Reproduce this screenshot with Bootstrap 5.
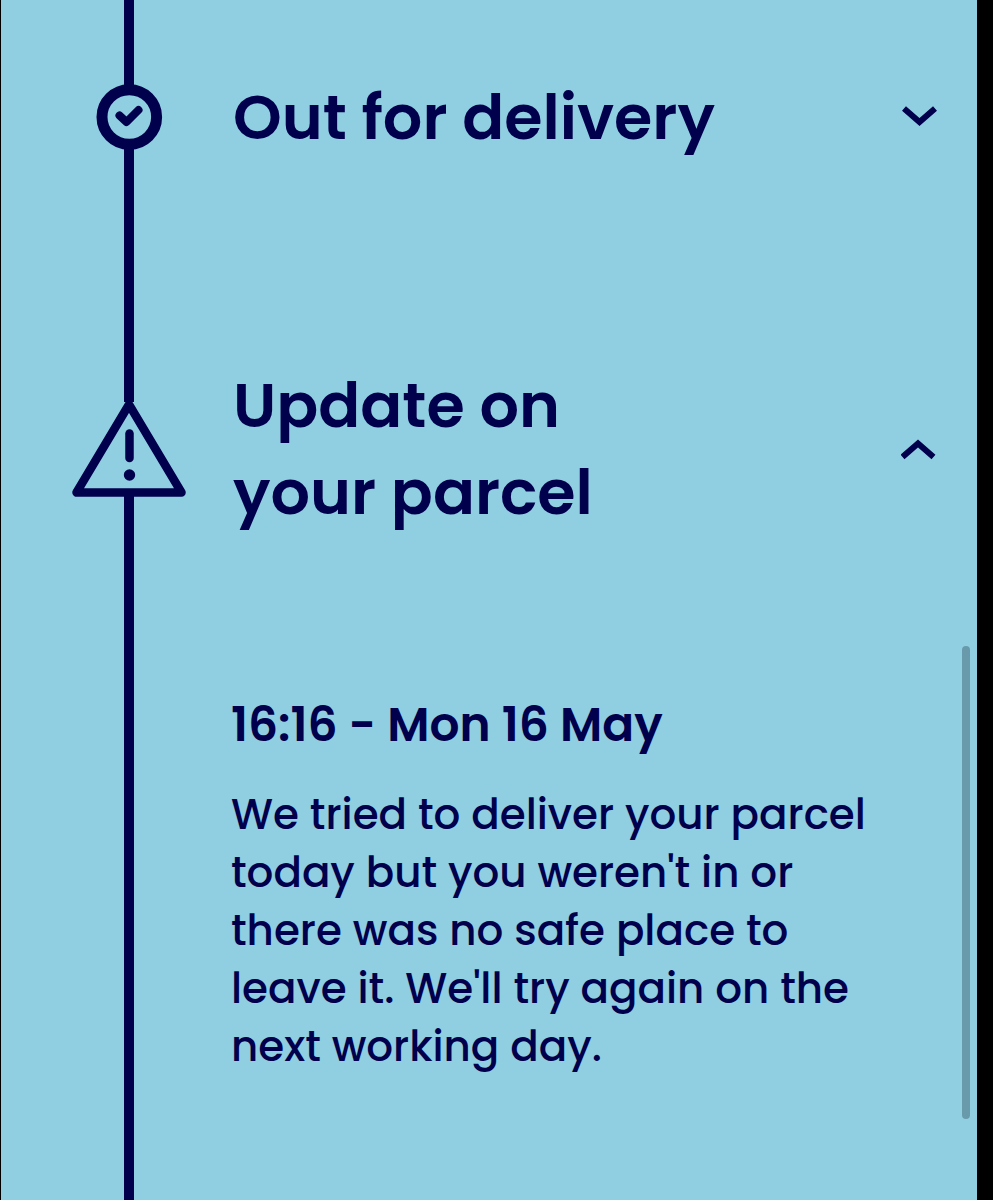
<!DOCTYPE html>
<html lang="en">
<head>
<meta charset="utf-8">
<meta name="viewport" content="width=device-width, initial-scale=1">
<title>Parcel tracking</title>
<link href="https://cdn.jsdelivr.net/npm/bootstrap@5.3.0/dist/css/bootstrap.min.css" rel="stylesheet">
<style>
  :root { --navy: #00004d; --sky: #90cee1; }
  body { background: #000; color: var(--navy); font-family: Poppins, Inter, sans-serif; }
  .tracker { background: var(--sky); border-left: 1px solid #000; border-right: 16px solid #000; }
  .step-row { padding-left: 72px; padding-right: 40px; column-gap: 46px; }
  .rail { width: 112px; }
  .rail svg { overflow: visible; margin: -1px 0; }
  .rail-line { width: 10px; background: var(--navy); }
  .step-short { min-height: 234px; }
  .step-tall { min-height: 429px; }
  .step-title { font-size: 62px; line-height: 87px; font-weight: 600; padding-left: 2px; }
  .step-toggle { color: inherit; font: inherit; }
  .step-date { font-size: 47px; line-height: 68px; font-weight: 600; margin-bottom: 27px; }
  .step-text { font-size: 42px; line-height: 58px; font-weight: 500; max-width: 660px; }
  .step-body { padding-top: 28px; padding-bottom: 120px; }
  .scroll-thumb { width: 8px; top: 646px; height: 473px; right: 7px; background: #699aab; }
</style>
</head>
<body>
<main class="tracker position-relative min-vh-100 d-flex flex-column overflow-hidden">
  <section class="step-row step-short d-flex">
    <div class="rail d-flex flex-column align-items-center flex-shrink-0">
      <div class="rail-line flex-grow-1"></div>
      <svg width="66" height="66" viewBox="0 0 66 66" fill="none" stroke="#00004d" aria-hidden="true">
        <circle cx="33.300" cy="33" r="27.300" stroke-width="11"/>
        <path d="M23.500 31.500l7 6.500 12-12" stroke-width="8" stroke-linecap="round" stroke-linejoin="round"/>
      </svg>
      <div class="rail-line flex-grow-1"></div>
    </div>
    <h2 class="step-title flex-grow-1 mb-0 d-flex">
      <button type="button" class="step-toggle btn p-0 border-0 rounded-0 w-100 d-flex align-items-center justify-content-between text-start" aria-expanded="false">
        <span>Out for delivery</span>
        <svg class="flex-shrink-0" width="36" height="22" viewBox="0 0 36 22" fill="none" stroke="#00004d" stroke-width="6" aria-hidden="true"><path d="M3 2.500l15.500 13.500 15.500-13.500"/></svg>
      </button>
    </h2>
  </section>

  <section class="flex-grow-1 d-flex flex-column">
    <div class="step-row step-tall d-flex">
      <div class="rail d-flex flex-column align-items-center flex-shrink-0">
        <div class="rail-line flex-grow-1"></div>
        <svg class="flex-shrink-0" width="114" height="96" viewBox="0 0 114 96" fill="none" stroke="#00004d" aria-hidden="true">
          <path d="M57 3.500L4.500 91.500h105z" stroke-width="8.500" stroke-linejoin="round"/>
          <path d="M57.500 32.500v24.500" stroke-width="8.500" stroke-linecap="round"/>
          <circle cx="57.500" cy="74" r="5.700" fill="#00004d" stroke="none"/>
        </svg>
        <div class="rail-line flex-grow-1"></div>
      </div>
      <h2 class="step-title flex-grow-1 mb-0 d-flex">
        <button type="button" class="step-toggle btn p-0 border-0 rounded-0 w-100 d-flex align-items-center justify-content-between text-start" aria-expanded="true" aria-controls="update-details">
          <span>Update on<br>your parcel</span>
          <svg class="flex-shrink-0" width="36" height="22" viewBox="0 0 36 22" fill="none" stroke="#00004d" stroke-width="6" aria-hidden="true"><path d="M1.500 19l15.500-13.500 15.500 13.500"/></svg>
        </button>
      </h2>
    </div>
    <div class="step-row flex-grow-1 d-flex" id="update-details">
      <div class="rail d-flex justify-content-center flex-shrink-0"><div class="rail-line"></div></div>
      <div class="step-body">
        <h3 class="step-date">16:16 - Mon 16 May</h3>
        <p class="step-text mb-0">We tried to deliver your parcel today but you weren't in or there was no safe place to leave it. We'll try again on the next working day.</p>
      </div>
    </div>
  </section>
  <div class="scroll-thumb position-absolute rounded-pill" aria-hidden="true"></div>
</main>
<script src="https://cdn.jsdelivr.net/npm/bootstrap@5.3.0/dist/js/bootstrap.bundle.min.js"></script>
</body>
</html>
